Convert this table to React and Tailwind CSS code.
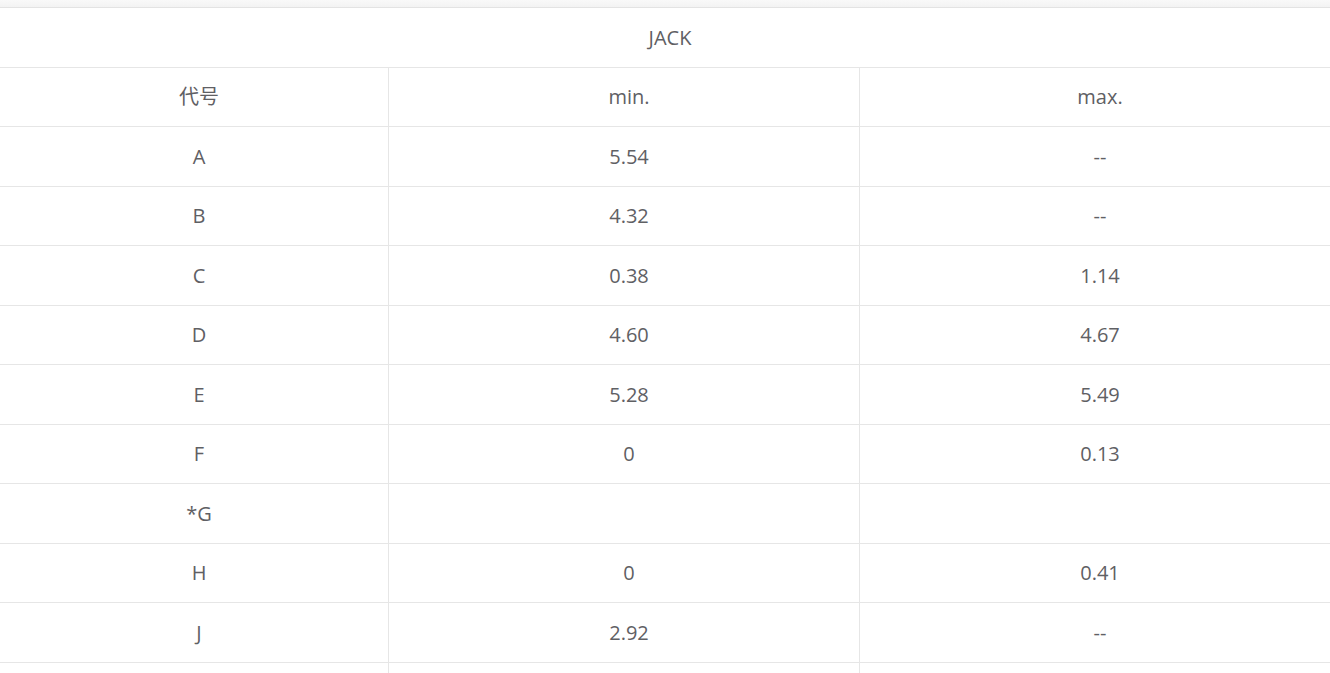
const rows = [
  ["A", "5.54", "--"],
  ["B", "4.32", "--"],
  ["C", "0.38", "1.14"],
  ["D", "4.60", "4.67"],
  ["E", "5.28", "5.49"],
  ["F", "0", "0.13"],
  ["*G", "", ""],
  ["H", "0", "0.41"],
  ["J", "2.92", "--"],
  ["", "", ""],
];

export default function App() {
  const font = { fontFamily: '"Open Sans", "Noto Sans CJK SC", sans-serif' };
  return (
    <div className="w-[1330px] h-[673px] overflow-hidden bg-white text-[#5f6064] text-[20px]" style={font}>
      <div className="h-[7px] bg-gradient-to-b from-[#f9f9f9] to-[#f3f3f3]" />
      <div className="border-t border-[#e3e3e3]">
        <div className="h-[60px] flex items-center justify-center pl-[10px] border-b border-[#e6e6e6]">JACK</div>
        <div className="grid grid-cols-[389px_471px_1fr] h-[59px] border-b border-[#e6e6e6]">
          <div className="flex items-center justify-center pl-[10px] border-r border-[#e6e6e6]">代号</div>
          <div className="flex items-center justify-center pl-[10px] border-r border-[#e6e6e6]">min.</div>
          <div className="flex items-center justify-center pl-[10px]">max.</div>
        </div>
        {rows.map((r, i) => (
          <div
            key={i}
            className={`grid grid-cols-[389px_471px_1fr] border-b border-[#e6e6e6] ${i % 2 === 0 ? "h-[60px]" : "h-[59px]"}`}
          >
            <div className="flex items-center justify-center pl-[10px] border-r border-[#e6e6e6]">{r[0]}</div>
            <div className="flex items-center justify-center pl-[10px] border-r border-[#e6e6e6]">{r[1]}</div>
            <div className="flex items-center justify-center pl-[10px]">{r[2]}</div>
          </div>
        ))}
      </div>
    </div>
  );
}
